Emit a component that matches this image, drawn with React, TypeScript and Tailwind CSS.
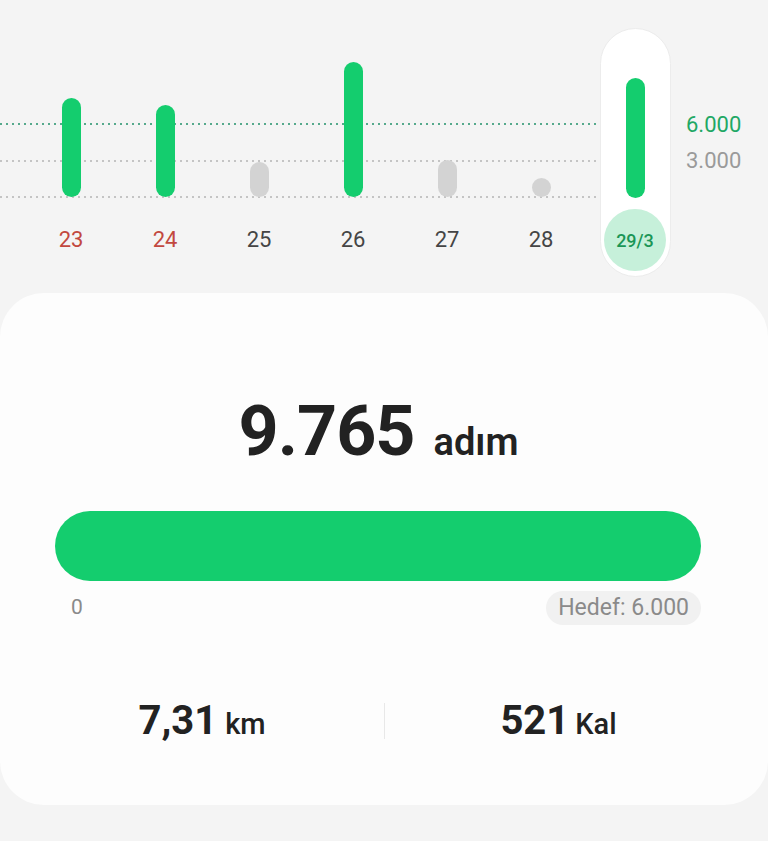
import React from 'react';

type Day = {
  label: string;
  value: number;
  tone: 'weekend' | 'normal';
  selected?: boolean;
};

const days: Day[] = [
  { label: '23', value: 99, tone: 'weekend' },
  { label: '24', value: 92, tone: 'weekend' },
  { label: '25', value: 35, tone: 'normal' },
  { label: '26', value: 135, tone: 'normal' },
  { label: '27', value: 37, tone: 'normal' },
  { label: '28', value: 19, tone: 'normal' },
  { label: '29/3', value: 120, tone: 'normal', selected: true },
];

// bars under the goal line are drawn grey
const goalPx = 74;

function Bar({ value }: { value: number }) {
  const color = value >= goalPx ? 'bg-[#14cd6e]' : 'bg-[#d3d3d3]';
  return <div className={`w-[19px] rounded-full ${color}`} style={{ height: value }} />;
}

function DayColumn({ day }: { day: Day }) {
  if (day.selected) {
    return (
      <div className="w-[94px] flex justify-center">
        <div className="w-[71px] h-[249px] rounded-full bg-white border border-[#ececec] flex flex-col items-center">
          <div className="h-[169px] w-full flex items-end justify-center">
            <Bar value={day.value} />
          </div>
          <div className="mt-[11px] w-[62px] h-[62px] rounded-full bg-[#c6f0da] flex items-center justify-center text-[18px] font-medium text-[#1a9656]">
            {day.label}
          </div>
        </div>
      </div>
    );
  }

  return (
    <div className="w-[94px] h-[249px] flex flex-col items-center">
      <div className="h-[169px] w-full flex items-end justify-center">
        <Bar value={day.value} />
      </div>
      <div
        className={`mt-[11px] h-[62px] flex items-center text-[22px] ${
          day.tone === 'weekend' ? 'text-[#c2483f]' : 'text-[#454545]'
        }`}
      >
        {day.label}
      </div>
    </div>
  );
}

function StepChart() {
  return (
    <div className="relative h-[293px]">
      <div className="absolute left-0 top-[123px] w-[600px] h-[2px] bg-[linear-gradient(to_right,#55a98c_2px,transparent_2px)] bg-[length:6px_2px]" />
      <div className="absolute left-0 top-[160px] w-[600px] h-[2px] bg-[linear-gradient(to_right,#c4c4c4_2px,transparent_2px)] bg-[length:6px_2px]" />
      <div className="absolute left-0 top-[196px] w-[600px] h-[2px] bg-[linear-gradient(to_right,#c4c4c4_2px,transparent_2px)] bg-[length:6px_2px]" />

      <div className="relative flex pl-[24px] pt-[28px]">
        {days.map((d) => (
          <DayColumn key={d.label} day={d} />
        ))}
        <div className="ml-[4px] pt-[82px] flex flex-col text-[22px] leading-[30px]">
          <span className="text-[#1fa865]">6.000</span>
          <span className="mt-[6px] text-[#9a9a9a]">3.000</span>
        </div>
      </div>
    </div>
  );
}

export default function App() {
  return (
    <div
      className="min-h-[841px] bg-[#f4f4f4] overflow-hidden"
      style={{ fontFamily: 'Roboto, "Noto Sans", sans-serif' }}
    >
      <StepChart />

      <div className="h-[512px] rounded-[44px] bg-[#fdfdfd] flex flex-col">
        <div className="mt-[103px] pr-[11px] flex items-baseline justify-center text-[#222]">
          <span className="text-[70px] font-bold leading-none tracking-[-1px]">9.765</span>
          <span className="ml-[19px] text-[38px] font-semibold leading-none">adım</span>
        </div>

        <div className="mt-[45px] ml-[55px] mr-[67px] h-[70px] rounded-full bg-[#14cd6e]" />

        <div className="mt-[10px] ml-[55px] mr-[67px] flex items-center justify-between">
          <span className="ml-[16px] text-[21px] text-[#8a8a8a]">0</span>
          <span className="px-[12px] h-[34px] rounded-full bg-[#f1f1f1] flex items-center text-[23px] text-[#8a8a8a]">
            Hedef: 6.000
          </span>
        </div>

        <div className="mt-[76px] grid grid-cols-[364px_1px_1fr] items-center pl-[20px] pr-[36px]">
          <div className="flex items-baseline justify-center text-[#222]">
            <span className="text-[40px] font-bold leading-none">7,31</span>
            <span className="ml-[8px] text-[29px] font-medium leading-none">km</span>
          </div>
          <div className="h-[36px] bg-[#e8e8e8]" />
          <div className="flex items-baseline justify-center text-[#222]">
            <span className="text-[40px] font-bold leading-none">521</span>
            <span className="ml-[6px] text-[29px] font-medium leading-none">Kal</span>
          </div>
        </div>
      </div>
    </div>
  );
}
